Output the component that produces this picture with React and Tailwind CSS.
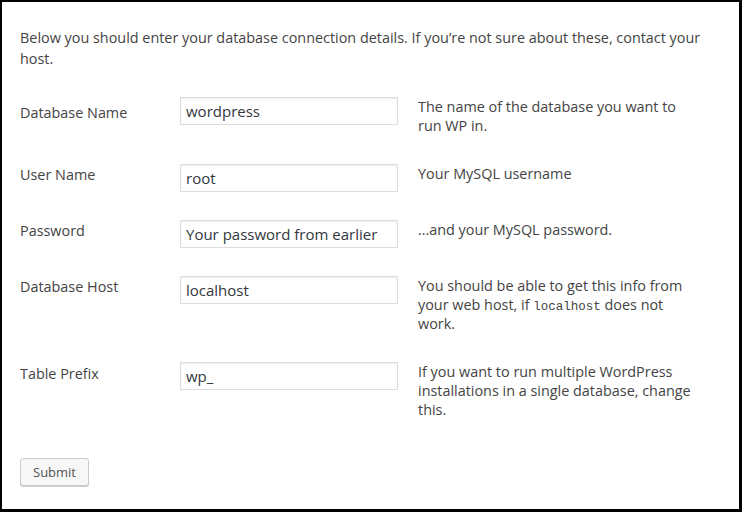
const fields = [
  {
    label: 'Database Name',
    value: 'wordpress',
    labelPad: 'pt-[6px]',
    help: <>The name of the database you want to run WP in.</>,
  },
  {
    label: 'User Name',
    value: 'root',
    labelPad: 'pt-[1px]',
    help: <>Your MySQL username</>,
  },
  {
    label: 'Password',
    value: 'Your password from earlier',
    labelPad: 'pt-[1px]',
    help: <>…and your MySQL password.</>,
  },
  {
    label: 'Database Host',
    value: 'localhost',
    labelPad: 'pt-[1px]',
    help: (
      <>
        You should be able to get this info from your web host, if{' '}
        <code className="font-['Liberation_Mono',monospace] text-[12.5px] leading-[0]">localhost</code> does not work.
      </>
    ),
  },
  {
    label: 'Table Prefix',
    value: 'wp_',
    labelPad: 'pt-[2px]',
    help: <>If you want to run multiple WordPress installations in a single database, change this.</>,
  },
];

export default function App() {
  return (
    <div className="w-[742px] h-[512px] bg-white border-l-2 border-t-2 border-r-[3px] border-b-[3px] border-black font-['Open_Sans',sans-serif] text-[#444] text-[14.4px] pl-[18px] pr-[17px] pt-[25px]">
      <p className="leading-[21px]">
        Below you should enter your database connection details. If you’re not sure about these, contact your host.
      </p>

      <div className="mt-[18px] flex flex-col">
        {fields.map((f) => (
          <div key={f.label} className="flex items-start py-[10px]">
            <label className={`w-[160px] shrink-0 leading-[19px] ${f.labelPad}`}>{f.label}</label>
            <div className="w-[238px] shrink-0 min-h-[36px]">
              <input
                type="text"
                defaultValue={f.value}
                className="w-[218px] h-[28px] border border-[#ddd] bg-white px-[5px] py-[3px] text-[15px] leading-[20px] text-[#32373c] shadow-[inset_0_1px_2px_rgba(0,0,0,0.07)] outline-none"
              />
            </div>
            <div className="w-[284px] leading-[19px] pb-[9px]">{f.help}</div>
          </div>
        ))}
      </div>

      <button className="mt-[20px] h-[28px] px-[12px] text-[13px] leading-[26px] text-[#555] bg-[#f7f7f7] border border-[#ccc] rounded-[3px] shadow-[0_1px_0_#ccc]">
        Submit
      </button>
    </div>
  );
}
